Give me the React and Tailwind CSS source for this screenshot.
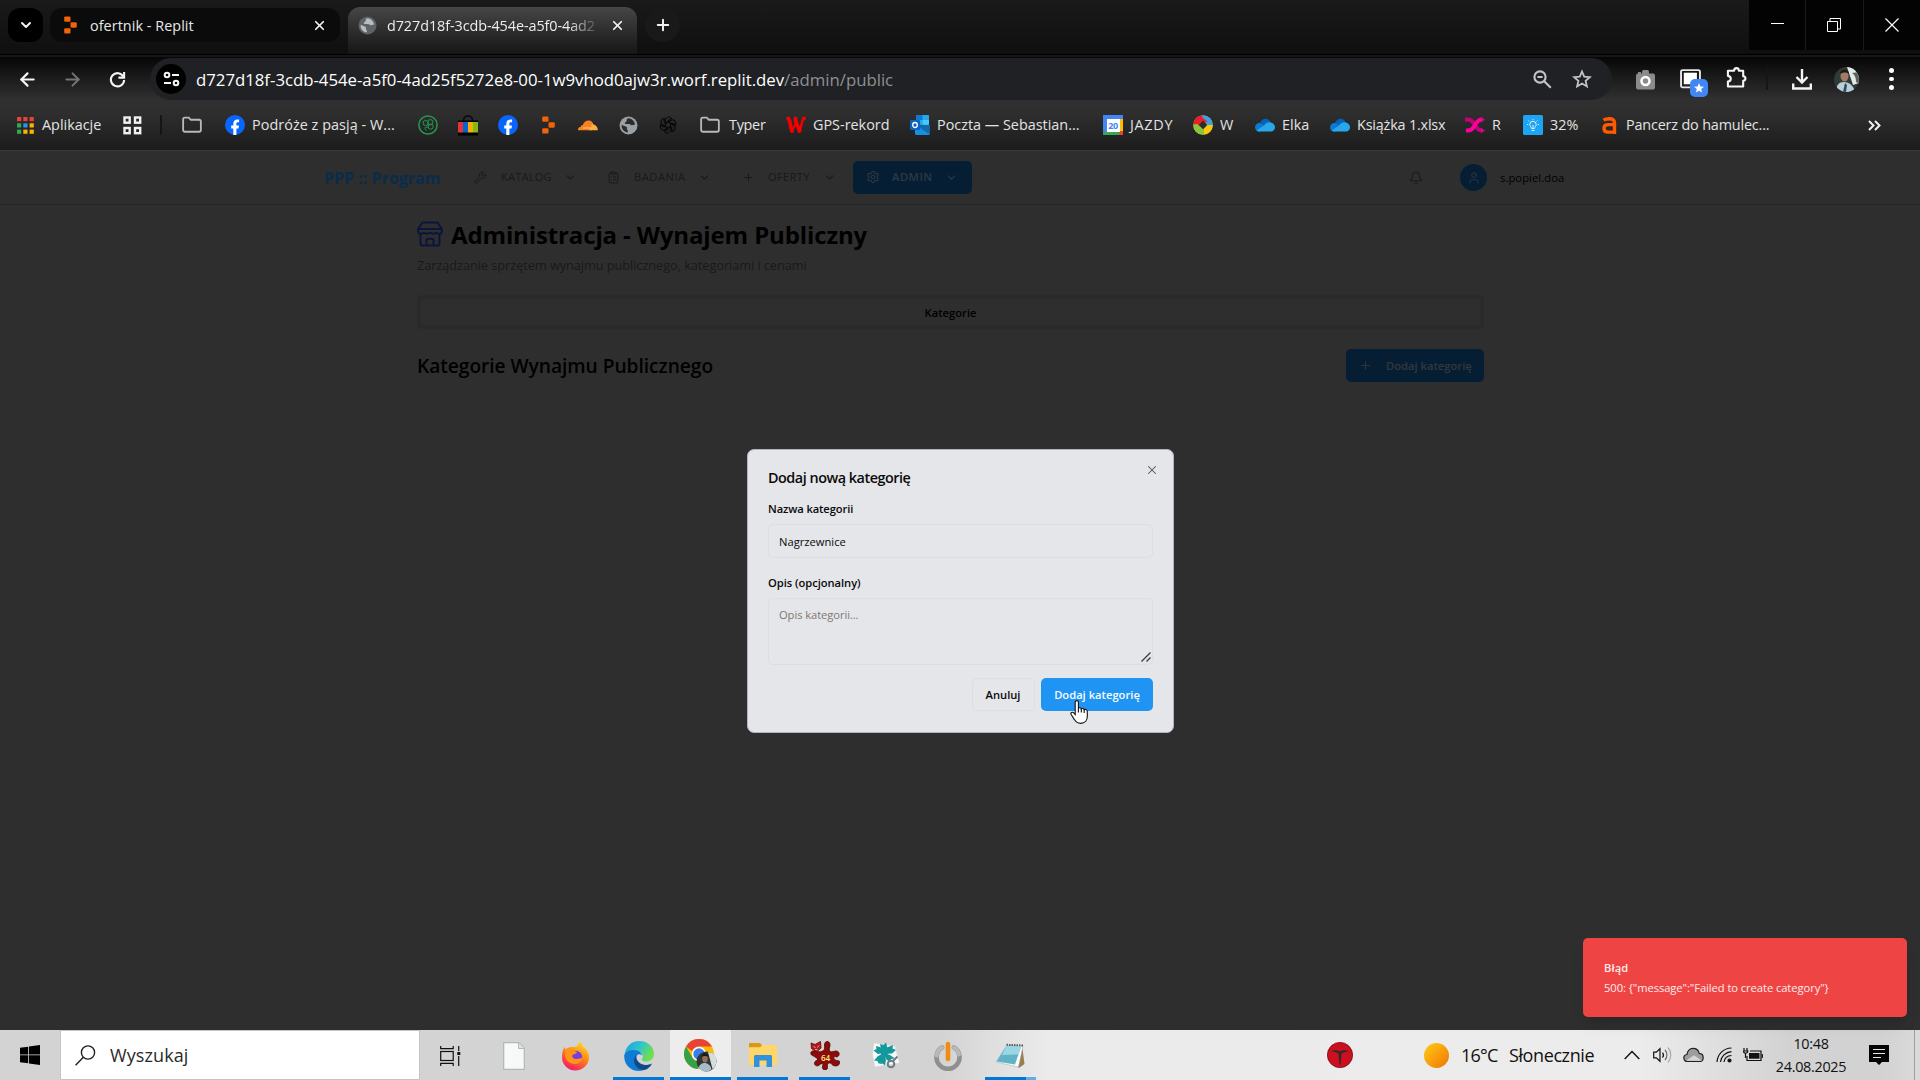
import React from "react";
import {
  ArrowLeft, ArrowRight, Bell, ChevronDown, ClipboardList, Plus, Settings, User, Wrench, X,
} from "lucide-react";

/* ---------- shared icons ---------- */

const ReplitIcon = () => (
  <svg width="13" height="18" viewBox="0 0 14 20" fill="#f26207">
    <rect x="0" y="0.5" width="7" height="6" rx="1.2" />
    <rect x="7" y="7" width="7" height="6" rx="1.2" />
    <rect x="0" y="13.5" width="7" height="6" rx="1.2" />
  </svg>
);

const Globe = ({ base = "#9aa0a6", land = "#2c2c2c" }) => (
  <svg width="19" height="19" viewBox="0 0 19 19">
    <circle cx="9.5" cy="9.5" r="9" fill={base} />
    <path
      d="M10 2.200c-2.200 0-2.600 1.200-2.300 2.400.3 1-.9 1.200-1.600 1.800-.8.800 0 1.500.9 1.500h3.200c1.200 0 1.300 1.200 2.200 1.400 1 .2 1.700-.6 3.500-.5A6.800 6.800 0 0 0 10 2.200ZM2.600 8.800c1.500.4 2.700 1.400 4 1.600 1.400.2 1.600 1.300 1.300 2.400-.2.900.9 1 .9 1.900v1.900A7 7 0 0 1 2.600 8.800Z"
      fill={land}
    />
  </svg>
);

const FolderIcon = () => (
  <svg width="21" height="18" viewBox="0 0 21 18" fill="none" stroke="#b9b9b9" strokeWidth="1.9">
    <path d="M1.200 3.200c0-1 .7-1.900 1.700-1.900h4.300L9.300 3.500h8.700c1 0 1.800.8 1.800 1.800v9c0 1-.8 1.800-1.800 1.800H3c-1 0-1.800-.8-1.800-1.800Z" />
  </svg>
);

const FacebookIcon = () => (
  <svg width="20" height="20" viewBox="0 0 20 20">
    <circle cx="10" cy="10" r="10" fill="#0866ff" />
    <path d="M8.300 20v-6.500H6.200v-3h2.100V9c0-3 1.300-4.600 4.100-4.600.6 0 1.300.1 1.700.2v2.600h-1.200c-1.200 0-1.500.5-1.500 1.500v1.800H14l-.5 3h-2.100V20Z" fill="#fff" />
  </svg>
);

const AppsIcon = () => (
  <svg width="17" height="17" viewBox="0 0 17 17">
    {["#ea4335", "#ea4335", "#ea4335", "#34a853", "#2196f3", "#fbb300", "#34a853", "#fbb300", "#fbb300"].map((c, i) => (
      <rect key={i} x={(i % 3) * 6.3} y={Math.floor(i / 3) * 6.3} width="4.200" height="4.200" fill={c} />
    ))}
  </svg>
);

const GridIcon = () => (
  <svg width="19" height="19" viewBox="0 0 19 19" fill="none" stroke="#f1f1f1" strokeWidth="2.400">
    <rect x="1.500" y="1.500" width="5.200" height="5.200" />
    <rect x="12" y="1.500" width="5.200" height="5.200" />
    <rect x="1.500" y="12" width="5.200" height="5.200" />
    <rect x="12" y="12" width="5.200" height="5.200" />
  </svg>
);

const GreenBadge = () => (
  <svg width="20" height="20" viewBox="0 0 20 20" fill="none" stroke="#239a50">
    <circle cx="10" cy="10" r="9.100" strokeWidth="1.500" />
    <circle cx="7.600" cy="8" r="2.600" />
    <circle cx="12.300" cy="7.200" r="2.600" />
    <circle cx="12.600" cy="11.600" r="2.600" />
    <path d="M8 12.500c1.500 0 2.500-1 3-2.500M8.500 15.500c-1.500-1-2-2.500-1-3.500" />
  </svg>
);

const BagIcon = () => (
  <svg width="20" height="21" viewBox="0 0 20 21">
    <path d="M5.500 6C5.500 2.500 7 1 10 1s4.500 1.500 4.500 5" fill="none" stroke="#0a0a0a" strokeWidth="1.500" />
    <rect x="0" y="5.500" width="20" height="15" fill="#000" />
    <rect x="0" y="7" width="5" height="10.500" fill="#e53238" />
    <rect x="5" y="7" width="5" height="10.500" fill="#0064d2" />
    <rect x="10" y="7" width="5" height="10.500" fill="#f5af02" />
    <rect x="15" y="7" width="5" height="10.500" fill="#86b817" />
  </svg>
);

const CloudflareIcon = () => (
  <svg width="20" height="11" viewBox="0 0 20 11">
    <path d="M0 9.800C0 8 1.200 6.800 2.800 6.700c0-1.200 1-2 2.100-1.700C5.700 2 8.200.3 11 .6c2.200.2 3.700 1.500 4.300 3.500L14 10.200H0Z" fill="#f6821f" />
    <path d="M13.500 4.200c3.500-.4 6.200 2 6.400 6h-9l2.400-2.700Z" fill="#fbad41" />
    <path d="M5 8h8.500" stroke="#fff" strokeWidth=".7" opacity=".7" />
  </svg>
);

const KnotIcon = () => (
  <svg width="18" height="18" viewBox="0 0 18 18" fill="none" stroke="#050505" strokeWidth="1">
    {[0, 60, 120, 180, 240, 300].map((a) => (
      <path key={a} transform={`rotate(${a} 9 9)`} d="M6.400 10.500V4.500c0-2 1.500-3.500 3.400-3.500 1.200 0 2.200.5 3 1.400L8.600 4.900" />
    ))}
  </svg>
);

const RedW = () => (
  <svg width="20" height="18" viewBox="0 0 20 18" fill="none" stroke="#f40000" strokeLinecap="round">
    <path d="M2.200 2.500c2 1 1.800 7 3.800 12.500" strokeWidth="3.800" />
    <path d="M9.500 2.500C9 7 12 9 13.500 15" strokeWidth="4" />
    <path d="M6 15 9 9" strokeWidth="1.800" />
    <path d="M18 2.500c-2.500 1-1.500 4-4 12" strokeWidth="2.400" />
    <circle cx="18" cy="2.600" r=".8" strokeWidth="2.400" />
  </svg>
);

const OutlookIcon = () => (
  <svg width="20" height="20" viewBox="0 0 20 20">
    <rect x="6" y="0" width="13" height="10" rx="1" fill="#28a8ea" />
    <rect x="6" y="0" width="6.500" height="5" fill="#0f78d4" />
    <rect x="12.500" y="5" width="6.500" height="5" fill="#50d9ff" opacity=".7" />
    <path d="M5 10h15v8.500c0 .8-.6 1.500-1.500 1.500h-12C5.700 20 5 19.300 5 18.500Z" fill="#1490df" />
    <path d="M5 9.500 20 19.500V10Z" fill="#123b6d" opacity=".45" />
    <rect x="0" y="5" width="10" height="10" rx="1" fill="#0a63c0" />
    <ellipse cx="5" cy="10" rx="2.300" ry="2.500" fill="none" stroke="#fff" strokeWidth="1.300" />
  </svg>
);

const CalendarIcon = () => (
  <div className="relative flex size-5 items-center justify-center bg-[#4285f4]">
    <div className="absolute right-0 top-1 h-3 w-1 bg-[#fbbc04]" />
    <div className="absolute bottom-0 left-0 h-[3px] w-4 bg-[#34a853]" />
    <div className="absolute bottom-0 right-0 h-1 w-1 bg-[#ea4335]" />
    <div className="relative flex h-[13px] w-[13px] items-center justify-center bg-white text-[9px] font-bold leading-none tracking-[-0.4px] text-[#4285f4]">20</div>
  </div>
);

const RingIcon = () => (
  <svg width="20" height="20" viewBox="0 0 20 20">
    <defs><clipPath id="ringClip"><circle cx="10" cy="10" r="9.800" /></clipPath></defs>
    <g clipPath="url(#ringClip)">
      <rect width="20" height="20" fill="#8cc63f" />
      <path d="M0 0h10l6 6-4 4H6L2 14H0Z" fill="#e8202a" />
      <path d="M9 0h11v12l-4-1-6-6Z" fill="#3f9fe0" />
      <path d="M20 10v10H11l-1-5 5-5Z" fill="#fdc60b" />
      <path d="M0 9.500 5 9l6 6v5H0Z" fill="#8cc63f" />
      <path d="M3 5.500 9 2.500l5.500 4-4 1L6 11Z" fill="#e8202a" />
      <path d="m10 5.800 4.200 4.200-4.200 4.200L5.800 10Z" fill="#2c2c2c" />
    </g>
  </svg>
);

const OneDrive = () => (
  <svg width="20" height="14" viewBox="0 0 20 14">
    <path d="M5 5.200C6 2.200 8 .7 10.500.7c2.400 0 4.300 1.300 5.200 3.800L12 9Z" fill="#0364b8" />
    <path d="M0 9.500C0 6.800 2 4.800 4.600 4.700L13 9 5 13.500H4C1.700 13.500 0 11.700 0 9.500Z" fill="#0f78d4" />
    <path d="M9 7.500c2-3 4.500-3.500 6.600-3 2.600.4 4.400 2.400 4.400 4.800 0 2.400-1.800 4.200-4 4.200H4.500c-1.200 0-2-.3-2.800-1Z" fill="#28a8ea" />
  </svg>
);

const PinkX = () => (
  <svg width="20" height="16" viewBox="0 0 20 16" fill="none" strokeWidth="4">
    <path d="M0 2.400h2.500C7 2.400 8 5 10 8s3 5.600 7 5.600" stroke="#c4007a" />
    <path d="M1 13.600h2C7 13.600 8 11 10 8s3-5.600 7-5.600" stroke="#ff009b" />
    <path d="m16 0 4 2.800-4 2.700ZM16 10.800l4 2.700-4 2.600Z" fill="#e6008b" stroke="none" />
  </svg>
);

const BulbTile = () => (
  <svg width="20" height="20" viewBox="0 0 20 20">
    <rect width="20" height="20" rx="1.500" fill="#1da4f2" />
    <g fill="none" stroke="#d8f1ff" strokeWidth="1">
      <path d="M8.500 13.500c0-1.500-1.700-2-1.700-4a3.200 3.200 0 0 1 6.400 0c0 2-1.700 2.500-1.700 4ZM8.500 15.500h3M10 10v3" />
      <path d="M10 4V5.200M5.500 5.500l1 1M14.500 5.500l-1 1M4 9.500h1.200M14.800 9.500H16" />
    </g>
  </svg>
);

const OrangeA = () => (
  <svg width="15" height="17" viewBox="0 0 15 17" fill="none" stroke="#ff5a00" strokeWidth="3.400">
    <path d="M1.500 3.200C3 2.100 5 1.800 7.500 1.800c3.200 0 5 1.200 5 4V17" />
    <path d="M12.500 7.600H6.500C3.500 7.600 2 9 2 11.300s1.500 3.800 4 3.800h6.500" />
  </svg>
);

/* ---------- browser chrome ---------- */

const WindowControls = () => (
  <div className="ml-auto flex h-[50px] w-[171px] gap-px bg-[#1a1a1a]">
    <div className="flex flex-1 items-center justify-center bg-[#030303] pb-[3px]">
      <div className="h-px w-[13px] bg-white" />
    </div>
    <div className="flex flex-1 items-center justify-center bg-[#030303]">
      <svg width="14" height="14" viewBox="0 0 14 14" fill="none" stroke="#fff">
        <path d="M.5 3.500h10v10H.5ZM3 3V.500h10.500V11H11" />
      </svg>
    </div>
    <div className="flex flex-1 items-center justify-center bg-[#030303]">
      <svg width="14" height="14" viewBox="0 0 14 14" fill="none" stroke="#fff" strokeWidth="1.200">
        <path d="m.5.5 13 13M13.500.5l-13 13" />
      </svg>
    </div>
  </div>
);

const TabStrip = () => (
  <div className="flex h-[54px] bg-gradient-to-b from-[#1a1a1a] to-[#0f0f0f]">
    <div className="ml-2 mt-2 flex h-[34px] w-[35px] items-center justify-center rounded-[12px] bg-black">
      <ChevronDown size={16} strokeWidth={3} color="#f2f2f2" />
    </div>
    <div className="ml-[7px] mt-2 flex h-[34px] w-[290px] items-center rounded-[12px] bg-[#0b0b0b] pl-[14px] text-[14.4px] tracking-[0.05px] text-[#e8e8e8]">
      <ReplitIcon />
      <span className="ml-[13px] w-[222px] pt-px">ofertnik - Replit</span>
      <X size={15} strokeWidth={2.8} color="#f2f2f2" />
    </div>
    <div className="w-2" />
    <div className="mt-[7px] flex h-[47px] w-[289px] rounded-t-[12px] bg-gradient-to-b from-[#474747] to-[#161616] pl-[10px] text-[14.4px] tracking-[-0.08px] text-[#ededed]">
      <div className="flex h-[37px] items-center">
        <Globe base="#5f6368" land="#b9bcc0" />
        <span className="ml-[10px] w-[210px] whitespace-nowrap [mask-image:linear-gradient(to_right,black_180px,transparent_215px)]">
          d727d18f-3cdb-454e-a5f0-4ad2
        </span>
        <X className="ml-[13px]" size={15} strokeWidth={2.8} color="#f2f2f2" />
      </div>
    </div>
    <div className="ml-2 mt-2 flex h-[34px] w-[35px] items-center justify-center rounded-full bg-[#191919]">
      <Plus size={18} strokeWidth={2.600} color="#f2f2f2" />
    </div>
    <WindowControls />
  </div>
);

const Toolbar = () => (
  <div className="flex h-[42px] w-full items-center pl-[5px]">
    <div className="flex w-[45px] justify-center"><ArrowLeft size={21} strokeWidth={2.500} color="#f5f5f5" /></div>
    <div className="flex w-[45px] justify-center"><ArrowRight size={21} strokeWidth={2.200} color="#757575" /></div>
    <div className="flex w-[45px] justify-center">
      <svg width="17" height="17" viewBox="0 0 18 18" fill="none" stroke="#f5f5f5" strokeWidth="2.200">
        <path d="M15.200 6A7 7 0 1 0 16 9.500" />
        <path d="M16 1v6h-6" />
      </svg>
    </div>
    <div className="ml-[10px] flex h-[42px] w-[1462px] items-center rounded-full bg-[#202124] pl-[6px]">
      <div className="flex size-[30px] items-center justify-center rounded-full bg-black">
        <svg width="17" height="16" viewBox="0 0 17 16" fill="none" stroke="#f5f5f5" strokeWidth="2">
          <circle cx="4" cy="4" r="2.300" /><path d="M9 4h7M1 12h7" /><circle cx="13" cy="12" r="2.300" />
        </svg>
      </div>
      <div className="ml-[10px] w-[1335px] whitespace-nowrap pt-px text-[16.8px] tracking-[-0.02px] text-white">
        d727d18f-3cdb-454e-a5f0-4ad25f5272e8-00-1w9vhod0ajw3r.worf.replit.dev
        <span className="text-[#8e8f92]">/admin/public</span>
      </div>
      <div className="flex w-[41px] items-center">
        <svg className="ml-[2px]" width="19" height="19" viewBox="0 0 19 19" fill="none" stroke="#c3c4c6" strokeWidth="2.100">
          <circle cx="7" cy="7" r="5.600" /><path d="m11.200 11.200 6.600 6.600M4.400 7h5.200" />
        </svg>
      </div>
      <svg width="20" height="20" viewBox="0 0 20 20" fill="none" stroke="#c3c4c6" strokeWidth="1.800">
        <path d="m10 2.500 2.200 5.200 5.700.5-4.300 3.700 1.300 5.500-4.900-2.900-4.900 2.900 1.300-5.500L2.100 8.200l5.700-.5Z" />
      </svg>
    </div>
    <div className="ml-[11px] flex w-[45px] justify-center pt-px">
      <svg width="19" height="20" viewBox="0 0 19 20">
        <rect x="0" y="3.500" width="19" height="16" rx="2" fill="#8b8b8b" />
        <rect x="6" y="0" width="7" height="6" rx="1.500" fill="#8b8b8b" />
        <rect x="2" y="2" width="3" height="3" fill="#8b8b8b" />
        <circle cx="9.500" cy="11" r="4" fill="#8b8b8b" stroke="#fff" strokeWidth="2.600" />
      </svg>
    </div>
    <div className="relative flex w-[45px] justify-center">
      <svg width="21" height="20" viewBox="0 0 20 19">
        <rect x="1" y="1" width="18" height="16.500" rx="1.500" fill="none" stroke="#e8e8e8" strokeWidth="1.800" />
        <rect x="3.600" y="3.500" width="12.500" height="11" fill="#fff" />
      </svg>
      <div className="absolute left-[22px] top-[10px] flex size-[18px] items-center justify-center rounded-[5px] bg-[#4285f4]">
        <svg width="10" height="10" viewBox="0 0 10 10"><path d="m5 0 1.400 3.400L10 3.700 7.200 6l.9 3.600L5 7.700 1.900 9.600 2.800 6 0 3.700l3.600-.3Z" fill="#fff" /></svg>
      </div>
    </div>
    <div className="flex w-[47px] justify-center pb-1">
      <svg width="21" height="24" viewBox="0 0 22 24" fill="none" stroke="#f5f5f5" strokeWidth="2.200" strokeLinejoin="round">
        <path d="M2 5.500h6.500c0-3.800 5-3.800 5 0H18v5.800c3.200.4 3.200 4.400 0 4.800V22H2v-5.200c4-.6 4-5.400 0-6Z" />
      </svg>
    </div>
    <div className="ml-[6px] h-[22px] w-[2px] bg-[#161616]" />
    <div className="ml-[11px] flex w-[45px] justify-center">
      <svg width="20" height="21" viewBox="0 0 20 21" fill="none" stroke="#f5f5f5" strokeWidth="2.400">
        <path d="M10 0v13M4.500 8 10 13.500 15.500 8M1.200 14.500v5h17.600v-5" />
      </svg>
    </div>
    <div className="flex w-[45px] justify-center">
      <svg width="25" height="25" viewBox="0 0 25 25">
        <defs><clipPath id="avatarClip"><circle cx="12.500" cy="12.500" r="12.500" /></clipPath></defs>
        <g clipPath="url(#avatarClip)">
          <rect width="25" height="25" fill="#2f3b39" />
          <path d="M13 0h12v16l-6 2Z" fill="#e3eae8" />
          <path d="M18 6c3 2 4 5 4 9l3 2V5Z" fill="#59655f" />
          <path d="M2 25c0-7 3-10 8-10s10 4 11 10Z" fill="#b9cfdc" />
          <ellipse cx="10.500" cy="9" rx="4" ry="5.500" fill="#a37a64" />
          <path d="M6 7c0-6 9-6 9 0-2-2-6-2-9 0Z" fill="#1c1a19" />
          <path d="m11 16 2 2-1 7h-3Z" fill="#33485c" />
        </g>
      </svg>
    </div>
    <div className="flex w-[45px] flex-col items-center gap-[4px]">
      <i className="size-[4.500px] rounded-full bg-white" /><i className="size-[4.500px] rounded-full bg-white" /><i className="size-[4.500px] rounded-full bg-white" />
    </div>
  </div>
);

const Bookmark = ({ w, icon, label, track = "" }) => (
  <div className={`flex h-full shrink-0 items-center gap-[7px] ${w}`}>
    <span className="flex w-5 shrink-0 justify-center">{icon}</span>
    {label && <span className={`whitespace-nowrap ${track}`}>{label}</span>}
  </div>
);

const BookmarksBar = () => (
  <div className="flex h-[50px] items-center pl-[15px] text-[14.4px] text-[#e3e3e3]">
    <Bookmark w="w-[107px]" icon={<AppsIcon />} label="Aplikacje" />
    <Bookmark w="w-[38px]" icon={<GridIcon />} />
    <div className="mr-[20px] h-5 w-[2px] rounded bg-[#151515]" />
    <Bookmark w="w-[43px]" icon={<FolderIcon />} />
    <Bookmark w="w-[193px]" icon={<FacebookIcon />} label="Podróże z pasją - W..." track="tracking-[0.05px]" />
    <Bookmark w="w-10" icon={<GreenBadge />} />
    <Bookmark w="w-10" icon={<BagIcon />} />
    <Bookmark w="w-10" icon={<FacebookIcon />} />
    <Bookmark w="w-10" icon={<ReplitIcon />} />
    <Bookmark w="w-10" icon={<CloudflareIcon />} />
    <Bookmark w="w-10" icon={<Globe />} />
    <Bookmark w="w-[42px]" icon={<KnotIcon />} />
    <Bookmark w="w-[86px]" icon={<FolderIcon />} label="Typer" track="pl-[2px] tracking-[-0.28px]" />
    <Bookmark w="w-[124px]" icon={<RedW />} label="GPS-rekord" />
    <Bookmark w="w-[193px]" icon={<OutlookIcon />} label="Poczta — Sebastian..." />
    <Bookmark w="w-[90px]" icon={<CalendarIcon />} label="JAZDY" track="tracking-[0.7px]" />
    <Bookmark w="w-[62px]" icon={<RingIcon />} label="W" />
    <Bookmark w="w-[75px]" icon={<OneDrive />} label="Elka" />
    <Bookmark w="w-[135px]" icon={<OneDrive />} label="Książka 1.xlsx" track="tracking-[-0.18px]" />
    <Bookmark w="w-[58px]" icon={<PinkX />} label="R" />
    <Bookmark w="w-[76px]" icon={<BulbTile />} label="32%" />
    <Bookmark w="w-[266px]" icon={<OrangeA />} label="Pancerz do hamulec..." track="tracking-[-0.17px]" />
    <svg className="ml-[3px]" width="13" height="11" viewBox="0 0 13 11" fill="none" stroke="#f0f0f0" strokeWidth="2">
      <path d="m1 1 4.500 4.500L1 10M7 1l4.500 4.500L7 10" />
    </svg>
  </div>
);

/* ---------- dimmed page ---------- */

const NavItem = ({ icon, label, iconW, labelW, cls = "" }) => (
  <div className="flex items-center">
    <span className={`flex justify-start ${iconW}`}>{icon}</span>
    <span className={`${labelW} ${cls}`}>{label}</span>
    <ChevronDown size={13} strokeWidth={2} />
  </div>
);

const StoreIcon = () => (
  <svg className="-mt-[3px]" width="26" height="26" viewBox="0 0 26 26" fill="none" stroke="#0a153a" strokeWidth="2" strokeLinejoin="round">
    <path d="M1.200 8 5.500 1.500h15L24.800 8Z" />
    <path d="M1.200 8v2.500c0 1.300 1.200 2.300 2.700 2.300s2.500-1 3-1c.6 0 1.500 1 3 1s2.500-1 3.100-1c.6 0 1.600 1 3.100 1s2.400-1 3-1c.5 0 1.500 1 3 1s2.700-1 2.700-2.300V8" />
    <path d="M3.500 13v9.500c0 1.200.8 2 2 2h15c1.200 0 2-.8 2-2V13M9.500 24.500v-5c0-1 .7-1.700 1.700-1.700h3.600c1 0 1.700.7 1.700 1.700v5" />
  </svg>
);

const AppHeader = () => (
  <header className="flex h-[54px] items-center border-b border-[#262626] pl-[324px] text-[11.2px] font-medium text-[#191919]">
    <div className="w-[150px] text-[16px] font-bold text-[#092c4a]">PPP :: Program</div>
    <div className="w-[133px]"><NavItem icon={<Wrench size={13} strokeWidth={1.800} />} label="KATALOG" iconW="w-[27px]" labelW="w-[63px]" cls="tracking-[0.13px]" /></div>
    <div className="w-[135px]"><NavItem icon={<ClipboardList size={13} strokeWidth={1.800} />} label="BADANIA" iconW="w-[27px]" labelW="w-[64px]" cls="tracking-[0.5px]" /></div>
    <div className="w-[111px]"><NavItem icon={<Plus size={13} strokeWidth={1.800} />} label="OFERTY" iconW="w-[26px]" labelW="w-[55px]" cls="tracking-[0.3px]" /></div>
    <div className="flex h-[33px] w-[119px] items-center rounded-[5px] bg-[#061e33] pl-[13px] font-semibold text-[#2e3942]">
      <NavItem icon={<Settings size={14} strokeWidth={1.800} />} label="ADMIN" iconW="w-[26px]" labelW="w-[53px]" cls="tracking-[0.5px]" />
    </div>
    <Bell className="ml-[437px]" size={14} strokeWidth={1.800} />
    <div className="ml-[37px] flex size-[27px] items-center justify-center rounded-full bg-[#061e33]">
      <User size={14} strokeWidth={1.600} color="#2e3942" />
    </div>
    <span className="ml-[13px] pt-px tracking-[0.08px] text-black">s.popiel.doa</span>
  </header>
);

const AdminPage = () => (
  <div className="flex h-[880px] flex-col border-t border-[#3a3a3a] bg-[#2e2e2e]">
    <AppHeader />
    <main className="ml-[417px] w-[1067px]">
      <div className="mt-[13px] flex h-[34px] items-center text-black">
        <StoreIcon />
        <h1 className="ml-[8px] text-[24px] font-bold leading-[34px] tracking-[-0.13px]">Administracja - Wynajem Publiczny</h1>
      </div>
      <p className="mt-[3px] text-[12.8px] leading-5 tracking-[-0.08px] text-[#1a1918]">
        Zarządzanie sprzętem wynajmu publicznego, kategoriami i cenami
      </p>
      <div className="mt-[20px] h-[34px] rounded-[5px] bg-[#2a2a2d] p-[4px]">
        <div className="flex h-[26px] items-center justify-center rounded-[3px] bg-[#2e2e2e] pt-[2px] text-[11.2px] font-semibold text-black">
          Kategorie
        </div>
      </div>
      <div className="mt-[20px] flex h-[33px] items-center justify-between">
        <h2 className="pt-[2px] text-[19.2px] font-semibold tracking-[-0.05px] text-black">Kategorie Wynajmu Publicznego</h2>
        <div className="flex h-[33px] w-[138px] items-center rounded-[5px] bg-[#061e33] pl-[13px] text-[11.2px] font-semibold text-[#32383c]">
          <Plus size={13} strokeWidth={1.800} />
          <span className="ml-[14px] whitespace-nowrap pt-px">Dodaj kategorię</span>
        </div>
      </div>
    </main>
  </div>
);

/* ---------- overlays ---------- */

const Dialog = () => (
  <div className="absolute left-[747px] top-[449px] h-[284px] w-[427px] rounded-[7px] border border-[#b4b4bd] bg-[#e5e6ea] px-5 pt-[18px] text-[11.2px] text-[#0c0a09]">
    <X className="absolute right-[14px] top-[13px]" size={14} strokeWidth={1.800} color="#555" />
    <h3 className="h-[20px] text-[14.4px] font-semibold leading-[20px] tracking-[-0.48px]">Dodaj nową kategorię</h3>
    <div className="mt-[12px] h-[18px] font-semibold leading-[18px] tracking-[-0.12px]">Nazwa kategorii</div>
    <div className="mt-[6px] flex h-[34px] items-center rounded-[5px] border border-[#dddee2] px-[10px] pt-[2px]">Nagrzewnice</div>
    <div className="mt-[16px] h-[18px] font-semibold leading-[18px] tracking-[-0.05px]">Opis (opcjonalny)</div>
    <div className="relative mt-[6px] h-[67px] rounded-[5px] border border-[#dddee2] px-[10px] pt-[7px] leading-[18px] tracking-[-0.08px] text-[#7d7873]">
      Opis kategorii...
      <svg className="absolute bottom-[2px] right-px" width="10" height="10" viewBox="0 0 10 10" stroke="#3a3a3a" strokeWidth="1.300">
        <path d="m.5 9.500 9-9M5.500 9.500l4-4" />
      </svg>
    </div>
    <div className="mt-[13px] flex justify-end gap-[6px] font-semibold">
      <div className="flex h-[33px] w-[63px] items-center justify-center rounded-[5px] border border-[#dddee2] pr-px pt-[2px]">Anuluj</div>
      <div className="flex h-[33px] w-[112px] items-center justify-center rounded-[5px] bg-[#2094f3] pt-[2px] text-[#f6fbff]">Dodaj kategorię</div>
    </div>
  </div>
);

const Pointer = () => (
  <svg className="absolute left-[1070px] top-[700px]" width="19" height="24" viewBox="0 0 19 24">
    <path
      d="M5.200 2.200C5.200 1.200 5.900.6 6.800.6s1.600.6 1.600 1.600v6c.3-.7 2.700-.7 2.900.6.6-.6 2.600-.4 2.800.9.7-.6 3.200-.3 3.200 1.700v5.200c0 3.800-2.400 6.800-6.600 6.800-3.200 0-4.800-1.200-6.300-3.800L1 14.200c-.6-1.400 1.200-2.700 2.500-1.500l1.700 1.800Z"
      fill="#fff" stroke="#111" strokeWidth="1.100"
    />
    <path d="M8.400 8v4.500M11.300 9v3.500M14.200 10v3" stroke="#111" strokeWidth="1.100" />
  </svg>
);

const Toast = () => (
  <div className="absolute left-[1583px] top-[938px] flex h-[79px] w-[324px] flex-col justify-center rounded-[5px] bg-[#ef4444] pl-[21px] pt-px text-[11.2px] leading-[20px] text-[#fdecec] shadow-lg">
    <div className="font-semibold tracking-[0.09px]">Błąd</div>
    <div className="tracking-[-0.07px]">{'500: {"message":"Failed to create category"}'}</div>
  </div>
);

/* ---------- taskbar ---------- */

const FirefoxIcon = () => (
  <svg width="29" height="30" viewBox="0 0 29 30">
    <defs>
      <linearGradient id="fx" x1=".8" y1="0" x2=".3" y2="1"><stop offset="0" stopColor="#ffe226" /><stop offset=".45" stopColor="#ff8a16" /><stop offset="1" stopColor="#f5156c" /></linearGradient>
    </defs>
    <path d="M19 .8c2 1.500 2.800 3.500 3 5 3.500 2 6.300 6 6 11A13.500 13.500 0 0 1 14.500 29.500 13.500 13.500 0 0 1 1 17C.8 12 2 8 4 6l.5 3c1-1.500 3-3 5.500-3 3 0 4-.5 6-.3C16.500 4 17.200 2 19 .8Z" fill="url(#fx)" />
    <circle cx="14.800" cy="16" r="6.200" fill="#7a3ee0" />
    <path d="M4 9c3-2 6-1 7.500 1 2 0 4 .5 4.500 1.200-.5 1.800-3.500 1.800-4.500 2.800-1 1.500.5 4 3.500 4s5-1.500 6-1c-.5 4-4 6-7.500 6-5 0-9-4-9.500-8.500Z" fill="#ff9416" />
  </svg>
);

const EdgeIcon = () => (
  <svg width="30" height="30" viewBox="0 0 30 30">
    <defs>
      <linearGradient id="eg" x1="0" y1="0" x2="1" y2=".4"><stop offset="0" stopColor="#1a9fe0" /><stop offset=".55" stopColor="#2fc4cf" /><stop offset="1" stopColor="#6fe04c" /></linearGradient>
    </defs>
    <path d="M.5 15C1 6 7 0 15.500 0 24 0 30 6 30 13c0 5-4 7.500-8 7.500-3 0-4.500-1.200-4-2.500 2.500-3 .5-7-4-7C7 9 2 11 .5 15Z" fill="url(#eg)" />
    <path d="M.3 14C2 10 6 8.500 10 9c4 .3 8 2.500 8.500 6-2-3-6-2-6.500 1.500C11.500 22 17 25 22 24c3-.5 4-1 5.500-1.500C25 27 20 30 15 30 6 30-.5 23 .3 14Z" fill="#0f7bd4" />
    <path d="M12.500 14c-4 3.500-3 10.500 2 13.500 3 1.800 7 1.500 9 .2 2-1.300 4-3.500 4.500-5.200-2 1.500-5 2-8 1.300-5-1-8.500-5-7.500-9.800Z" fill="#114a8b" />
  </svg>
);

const ChromeIcon = () => (
  <svg width="33" height="33" viewBox="0 0 33 33">
    <circle cx="15" cy="15" r="15" fill="#fbbc05" />
    <path d="M2 7.500A15 15 0 0 1 28 7.500H15A7.500 7.500 0 0 0 8 12Z" fill="#ea4335" />
    <path d="M2 7.500 8.500 18.700A7.500 7.500 0 0 0 15 22.500l-1 7.500A15 15 0 0 1 2 7.500Z" fill="#34a048" />
    <circle cx="15" cy="15" r="7.200" fill="#fff" />
    <circle cx="15" cy="15" r="5.700" fill="#3b7ded" />
    <circle cx="22.500" cy="22.500" r="10" fill="#303634" />
    <path d="M24 13c5 0 8.500 4 8.500 9 0 4-2 6.500-4 8Z" fill="#d7dddc" />
    <path d="M14.500 28.500c2-4 4-5 7-4.500 3 .5 5.500 3 6 6.500-4 3-10 2.500-13-2Z" fill="#a6bccb" />
    <ellipse cx="21" cy="19.500" rx="2.800" ry="4" fill="#92705e" />
    <path d="M17.500 18c0-5 7-5 7 0-2-1.500-5-1.500-7 0Z" fill="#1c1a19" />
  </svg>
);

const ExplorerIcon = () => (
  <svg width="28" height="25" viewBox="0 0 28 25">
    <path d="M0 1c0-.6.400-1 1-1h10l2 2.200-2 2.300H0Z" fill="#d99a12" />
    <path d="M0 4.500h11L13.500 2H27c.6 0 1 .4 1 1v19H0Z" fill="#ffd667" />
    <path d="M5 24V13.500c0-.8.600-1.500 1.500-1.500h15c.8 0 1.500.7 1.500 1.500V24h-5.500v-6.500h-7V24Z" fill="#3391dc" />
  </svg>
);

const PuzzleIcon = () => (
  <svg width="30" height="29" viewBox="0 0 30 29">
    <path d="M14 9c1-1 .5-3 .5-5 0-5 6-4.500 5.500.5-.3 2-1.500 4 0 6 2 1 4-.5 6-.5 4 0 4 5 1 6-1 0-2-1-3 0s1 3 3 3.500 3-.5 2.500 3c-.5 3-6 3-7.500 1-1-2-4-2-4.500 0-.3 3 1 5-2.500 5.300-3 0-3-3-2-5 0-2-3-1-4 .5-2 1.500-5 0-4.500-2.500.5-2 2-2 3-3C8 17 4 15.500 1.500 14 0 12 1 9.500 4 10c3 1 8 1.500 10-1Z" fill="#8e0b0b" stroke="#4d0404" strokeWidth=".8" />
    <path d="m1 2 4 1.500L10.500.500 11 7 6.500 11 1.500 7.500Z" fill="#b5181b" stroke="#5c0707" strokeWidth=".8" />
    <path d="m3.500 5.500 2 1M9 4.500l-1.500 2M5 8.500h2.500" stroke="#f0a0a0" />
    <text x="11" y="19.500" fontSize="8" fontWeight="600" fill="#ffef7a" fontFamily="Open Sans">64</text>
  </svg>
);

const TealIcon = () => (
  <svg width="28" height="27" viewBox="0 0 28 27">
    <path d="m2 1 21 3 4.500 17L3 25 .5 12Z" fill="#f6f9f9" stroke="#d3d8d8" strokeWidth=".6" />
    <g fill="#15989c">
      <path d="M12.500 12 9 7 8 2l3.500 1L14 .5 15.500 6Z" />
      <path d="M12.500 12 15 5.500 21 3l-.5 3.500 3.500 1.500-4 3.500Z" />
      <path d="m12 11-6 1-4.500-3.500L4.500 7 4 4l5 1.500Z" />
      <path d="m12 11 6 2 5 3.500-4 .5-1 3.500-4-3.500Z" />
      <path d="m12.500 11-1 6.500L7 22l-1.500-3L2 18.500 6 14Z" />
      <path d="m12 11 2 7-1 5.500-2.500-2L8 22l1-6Z" />
      <circle cx="12.300" cy="12" r="3.500" />
    </g>
    <g fill="none" stroke="#6f7c80" strokeWidth="2"><circle cx="19" cy="22" r="3.300" /><path d="m21 19 4.500-4.500" /></g>
  </svg>
);

const PowerIcon = () => (
  <svg width="28" height="30" viewBox="0 0 28 30" fill="none" strokeLinecap="round">
    <path d="M8 6.500a11.500 11.500 0 1 0 12 0" stroke="#8f8f8f" strokeWidth="4.600" />
    <path d="M8 6.500a11.500 11.500 0 0 0-5.400 8M20 6.500a11.500 11.500 0 0 1 5 7" stroke="#b8b8b8" strokeWidth="4" />
    <path d="M14 3v15" stroke="#f08c12" strokeWidth="4.600" />
  </svg>
);

const NotepadIcon = () => (
  <svg width="29" height="26" viewBox="0 0 29 26">
    <path d="m26 2 2.500 19-5.500 4-3-3Z" fill="#9a7d4d" />
    <path d="M11 2.500 27 3l-4.500 21L0 19Z" fill="#fdfdfd" stroke="#9aa5aa" strokeWidth=".5" />
    <path d="M10.500 2.500 25 4l-6 17.500L.5 18.500Z" fill="#63b3c8" />
    <path d="M10.500 2.500 25 4l-2.500 7.500L6 12Z" fill="#9bd7e2" />
    <path d="M10.500 1.800 27 2.500" stroke="#5a5a5a" strokeWidth="2" strokeDasharray="1.500 1" />
  </svg>
);

const TaskButton = ({ w, bar, active, children }) => (
  <div className={`flex h-[50px] shrink-0 flex-col items-center ${w} ${active ? "bg-[#ededed]" : ""}`}>
    <div className="flex h-[47px] items-center justify-center pt-[4px]">{children}</div>
    {bar && <div className={`h-[3px] bg-[#0078d7] ${bar}`} />}
  </div>
);

const Tray = () => (
  <div className="flex h-full items-center text-[#111]">
    <svg width="26" height="26" viewBox="0 0 26 26">
      <circle cx="13" cy="13" r="12.600" fill="#cc1020" stroke="#7a0a12" strokeWidth=".8" />
      <path d="M4 8.500c3 0 6-1 9 1 3-2 6-1 9-1-2 1.500-5 1.500-7.500 3L13.500 23h-1l-1-11.500C9 10 6 10 4 8.500Z" fill="#33262a" />
    </svg>
    <div className="ml-[71px] size-[25px] rounded-full bg-gradient-to-br from-[#ffcc12] to-[#ee7206]" />
    <span className="ml-[12px] w-[48px] text-[18px] tracking-[-0.78px]">16°C</span>
    <span className="w-[115px] text-[18px] tracking-[-0.4px]">Słonecznie</span>
    <svg width="16" height="10" viewBox="0 0 16 10" fill="none" stroke="#111" strokeWidth="1.400"><path d="m.7 9 7.300-7.500L15.300 9" /></svg>
    <svg className="ml-[13px]" width="20" height="18" viewBox="0 0 20 18" fill="none" stroke="#111" strokeWidth="1.200">
      <path d="M.7 6.200h2.600L7 2.700v12.600l-3.700-3.500H.7Z" /><path d="M9.500 6.500a4 4 0 0 1 0 5" /><path d="M12 4a7.500 7.500 0 0 1 0 10" stroke="#666" /><path d="M15 1.500a11.500 11.500 0 0 1 0 15" stroke="#aaa" />
    </svg>
    <svg className="ml-[10px]" width="21" height="16" viewBox="0 0 21 15">
      <path d="M4.500 14C2.200 14 .8 12.500.8 10.500S2.200 7.200 4 7c.3-3.500 2.700-6.200 6-6.200s5.500 2 6.200 5c2.400.2 4 1.800 4 4.100s-1.600 4.100-4 4.100Z" fill="#9d9d9d" stroke="#222" strokeWidth="1.200" />
      <path d="m3 13.200 8-5.500 8 5.500Z" fill="#d5d5d5" />
    </svg>
    <svg className="ml-[12px]" width="16" height="18" viewBox="0 0 16 16" fill="none" stroke="#111" strokeWidth="1.200">
      <path d="M1 15C1.500 7 7.500 1.200 15.500 1" /><path d="M4.500 15C5 9.500 9.500 5 15.500 4.600" /><path d="M8 15c.5-3.600 3.500-6.300 7.500-6.500" /><circle cx="13.500" cy="13.500" r="1.500" fill="#111" />
    </svg>
    <svg className="ml-[11px]" width="20" height="14" viewBox="0 0 20 14" fill="none" stroke="#111" strokeWidth="1.200">
      <path d="M7 3h11v9.500H4V8" /><rect x="6" y="5" width="10.500" height="5.700" fill="#111" stroke="none" /><path d="M19.300 6v4M1 0v3M4 0v3M.3 3h4.500c0 3-4 3-4.400 0M2.500 5.500V10" />
    </svg>
    <div className="ml-[9px] w-[78px] text-center text-[14.4px] leading-[23px] tracking-[-0.3px]">
      <div>10:48</div>
      <div>24.08.2025</div>
    </div>
    <svg className="ml-[19px]" width="20" height="20" viewBox="0 0 20 20">
      <path d="M0 0h20v17h-7l-3 3-3-3H0Z" fill="#050505" /><path d="M4 4.500h12M4 8.500h12M4 12.500h8" stroke="#e5e5e5" strokeWidth="1.200" />
    </svg>
    <div className="ml-[25px] h-full w-px bg-[#a0a0a0]" />
  </div>
);

const Taskbar = () => (
  <div className="flex h-[50px] bg-[linear-gradient(to_right,#d3d3d3_0px,#d3d3d3_940px,#ebebeb_1050px,#ececec_1640px,#d2d2d2_1790px,#d2d2d2_1880px,#dadada_1920px)]">
    <div className="flex w-[60px] items-center justify-center">
      <svg width="20" height="20" viewBox="0 0 20 20" fill="#000">
        <path d="M0 2.800 8.200 1.700v7.800H0ZM9 1.600 20 0v9.500H9ZM0 10.300h8.200v8L0 17.200ZM9 10.300h11V20L9 18.400Z" />
      </svg>
    </div>
    <div className="flex w-[360px] items-center border border-[#c4c4c4] bg-white pl-[14px]">
      <svg width="21" height="21" viewBox="0 0 21 21" fill="none" stroke="#222" strokeWidth="1.400">
        <circle cx="13" cy="7.500" r="6.600" /><path d="M8.300 12.200.600 20.200" />
      </svg>
      <span className="ml-[14px] text-[18px] tracking-[0.1px] text-[#2a2a2a]">Wyszukaj</span>
    </div>
    <TaskButton w="w-[60px]">
      <svg width="21" height="20" viewBox="0 0 21 20" fill="none" stroke="#111" strokeWidth="1.200">
        <rect x=".7" y="5.500" width="12.500" height="9" /><path d="M.7 0v2.700h12.500V0M.7 20v-2.700h12.500V20M18.700 0v5M18.700 10v10" /><rect x="17.300" y="6" width="3" height="3" fill="#111" stroke="none" />
      </svg>
    </TaskButton>
    <TaskButton w="w-[68px]">
      <svg width="22" height="28" viewBox="0 0 22 28">
        <path d="M.7.700h15l5.600 5.600v21H.7Z" fill="#f7f9f9" stroke="#b3b6b6" strokeWidth="1.200" /><path d="M15.500.7v5.800h5.800" fill="#dfe2e2" stroke="#b3b6b6" />
      </svg>
    </TaskButton>
    <TaskButton w="w-[59px]"><div className="pr-[4px]"><FirefoxIcon /></div></TaskButton>
    <TaskButton w="w-[63px]" bar="w-[51px]"><EdgeIcon /></TaskButton>
    <TaskButton w="w-[61px]" bar="w-[61px]" active><ChromeIcon /></TaskButton>
    <TaskButton w="w-[63px]" bar="w-[51px]"><ExplorerIcon /></TaskButton>
    <TaskButton w="w-[61px]" bar="w-[51px]"><PuzzleIcon /></TaskButton>
    <TaskButton w="w-[62px]"><TealIcon /></TaskButton>
    <TaskButton w="w-[62px]"><PowerIcon /></TaskButton>
    <TaskButton w="w-[63px]" bar="w-[51px] bg-[linear-gradient(to_right,#0078d7_41px,#62ade6_41px)]"><NotepadIcon /></TaskButton>
    <div className="ml-auto mr-[5px]"><Tray /></div>
  </div>
);

export default function App() {
  return (
    <div className="relative flex h-[1080px] w-[1920px] flex-col overflow-hidden bg-black [font-family:'Open_Sans','Noto_Sans',sans-serif]">
      <TabStrip />
      <div className="h-px bg-black" />
      <div className="h-[2px] bg-[#171717]" />
      <div className="h-[93px] bg-[linear-gradient(to_bottom,#060606,#1c1c1c_22px,#303030_43px,#2e2e2e_56px,#1c1c1c)] pt-px">
        <Toolbar />
        <BookmarksBar />
      </div>
      <AdminPage />
      <Dialog />
      <Pointer />
      <Toast />
      <Taskbar />
    </div>
  );
}
